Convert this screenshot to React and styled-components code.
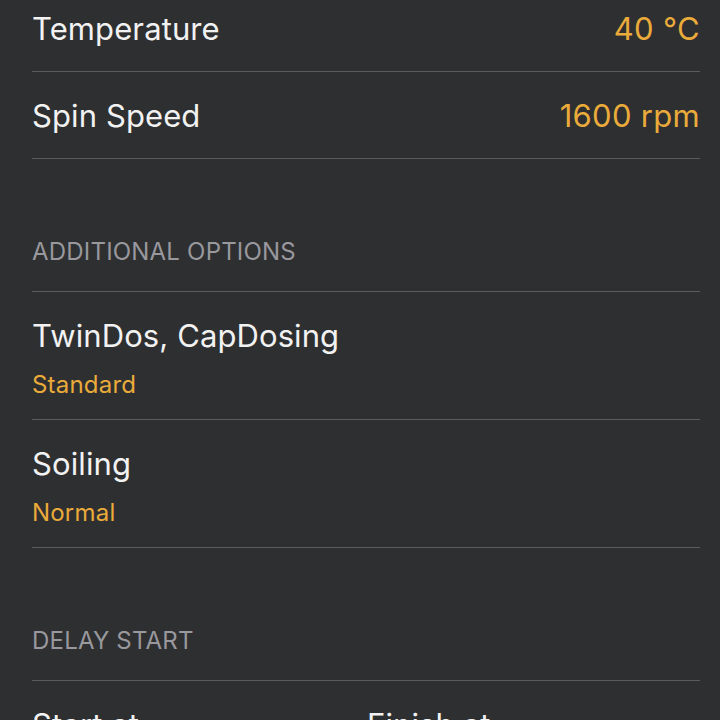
import React from "react"
import styled, { createGlobalStyle } from "styled-components"

const Global = createGlobalStyle`
  html, body {
    margin: 0;
    padding: 0;
    background: #2e2f31;
  }
  body {
    font-family: Inter, "Noto Sans", sans-serif;
    -webkit-font-smoothing: antialiased;
  }
  * { box-sizing: border-box; }
`

const Screen = styled.div`
  width: 720px;
  height: 720px;
  overflow: hidden;
  background: #2e2f31;
`

const List = styled.div`
  margin-top: -15px;
  padding: 0 20px 0 32px;
`

const Row = styled.div`
  height: 87px;
  display: flex;
  align-items: center;
  justify-content: space-between;
  border-bottom: 1px solid #5b5b5e;
`

const Label = styled.span`
  font-size: 31px;
  font-weight: 400;
  color: #f2f2f2;
  letter-spacing: 0.1px;
`

const Value = styled.span`
  font-size: 31px;
  color: #eaab3b;
  letter-spacing: 0.3px;
`

const SectionHead = styled.div`
  height: 133px;
  display: flex;
  align-items: flex-end;
  padding-bottom: 25px;
  border-bottom: 1px solid #5b5b5e;
  font-size: 24px;
  color: #98989d;
  letter-spacing: 0.2px;
`

const OptionRow = styled.div`
  height: 128px;
  padding-top: 25px;
  display: flex;
  flex-direction: column;
  border-bottom: 1px solid #5b5b5e;
`

const Sub = styled.span`
  margin-top: 16px;
  font-size: 24px;
  color: #eaab3b;
  letter-spacing: 0.2px;
`

const TimeRow = styled.div`
  display: grid;
  grid-template-columns: 335px 1fr;
  padding-top: 25px;
`

const settings = [
  { label: "Temperature", value: "40 °C" },
  { label: "Spin Speed", value: "1600 rpm" },
]

const options = [
  { label: "TwinDos, CapDosing", value: "Standard" },
  { label: "Soiling", value: "Normal" },
]

export default function App() {
  return (
    <Screen>
      <Global />
      <List>
        {settings.map(s => (
          <Row key={s.label}>
            <Label>{s.label}</Label>
            <Value>{s.value}</Value>
          </Row>
        ))}
        <SectionHead>ADDITIONAL OPTIONS</SectionHead>
        {options.map(o => (
          <OptionRow key={o.label}>
            <Label>{o.label}</Label>
            <Sub>{o.value}</Sub>
          </OptionRow>
        ))}
        <SectionHead>DELAY START</SectionHead>
        <TimeRow>
          <Label>Start at</Label>
          <Label>Finish at</Label>
        </TimeRow>
      </List>
    </Screen>
  )
}
